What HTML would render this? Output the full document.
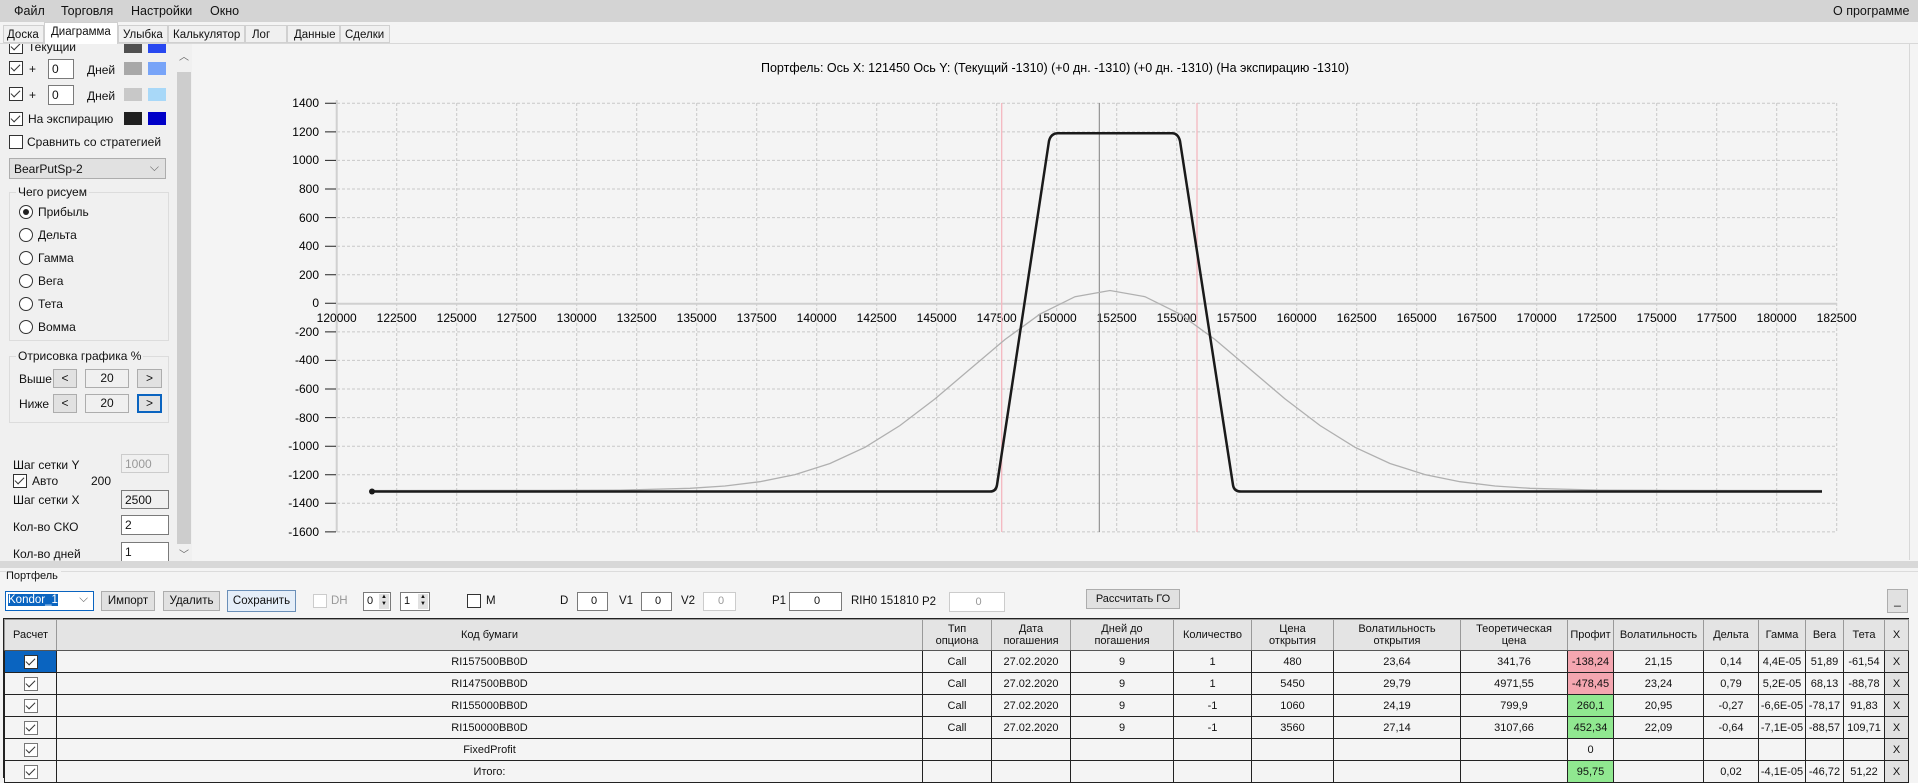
<!DOCTYPE html>
<html><head><meta charset="utf-8"><style>
*{box-sizing:border-box;margin:0;padding:0}
body{width:1918px;height:777px;overflow:hidden;background:#f4f4f4;font-family:"Liberation Sans",sans-serif;font-size:12px;color:#111;position:relative}
.a{position:absolute;white-space:nowrap}
.cb{position:absolute;width:14px;height:14px;border:1px solid #333;background:#fff}
.cb.on::after{content:"";position:absolute;left:3px;top:0px;width:4px;height:8px;border:solid #333;border-width:0 1.3px 1.3px 0;transform:rotate(45deg)}
.rd{position:absolute;width:14px;height:14px;border:1px solid #333;border-radius:50%;background:#fff}
.rd.on::after{content:"";position:absolute;left:3px;top:3px;width:6px;height:6px;border-radius:50%;background:#222}
.inp{position:absolute;border:1px solid #7a7a7a;background:#fff;padding-left:3px;font-size:12px}
.btn{position:absolute;border:1px solid #adadad;background:#e1e1e1;text-align:center;font-size:12px}
.sw{position:absolute;width:18px;height:13px}
table{border-collapse:collapse;position:absolute;left:4px;top:619px;font-size:11px}
td{border:1px solid #222;text-align:center;height:22px;background:#f4f4f4;padding:0;overflow:hidden;white-space:nowrap}
tr.h td{background:#e4e4e4;height:31px;line-height:12px;border-color:#999 #999 #555}
</style></head><body>
<div class="a" style="left:0;top:0;width:1918px;height:22px;background:#d4d4d4"></div>
<div class="a" style="left:14px;top:4px;font-size:12.5px">Файл</div>
<div class="a" style="left:61px;top:4px;font-size:12.5px">Торговля</div>
<div class="a" style="left:131px;top:4px;font-size:12.5px">Настройки</div>
<div class="a" style="left:210px;top:4px;font-size:12.5px">Окно</div>
<div class="a" style="left:1833px;top:4px;font-size:12.5px">О программе</div>
<div class="a" style="left:0;top:43px;width:1918px;height:1px;background:#d8d8d8"></div>
<div class="a" style="left:3px;top:25px;width:41px;height:18px;border:1px solid #d0d0d0;background:#f0f0f0;font-size:11.5px;padding:3px 0 0 3px">Доска</div>
<div class="a" style="left:44px;top:22px;width:74px;height:22px;border:1px solid #d0d0d0;border-bottom:none;background:#fff;font-size:11.5px;padding:3px 0 0 6px">Диаграмма</div>
<div class="a" style="left:118px;top:25px;width:50px;height:18px;border:1px solid #d0d0d0;background:#f0f0f0;font-size:11.5px;padding:3px 0 0 4px">Улыбка</div>
<div class="a" style="left:168px;top:25px;width:77px;height:18px;border:1px solid #d0d0d0;background:#f0f0f0;font-size:11.5px;padding:3px 0 0 4px">Калькулятор</div>
<div class="a" style="left:245px;top:25px;width:42px;height:18px;border:1px solid #d0d0d0;background:#f0f0f0;font-size:11.5px;padding:3px 0 0 6px">Лог</div>
<div class="a" style="left:287px;top:25px;width:53px;height:18px;border:1px solid #d0d0d0;background:#f0f0f0;font-size:11.5px;padding:3px 0 0 6px">Данные</div>
<div class="a" style="left:340px;top:25px;width:50px;height:18px;border:1px solid #d0d0d0;background:#f0f0f0;font-size:11.5px;padding:3px 0 0 4px">Сделки</div>
<div class="a" style="left:1909px;top:44px;width:1px;height:516px;background:#d8d8d8"></div>
<div class="a" style="left:0;top:44px;width:176px;height:518px;background:#f0f0f0;overflow:hidden">
 <div class="cb on" style="left:9px;top:-4px"></div><div class="a" style="left:28px;top:-4px">Текущий</div>
 <div class="sw" style="left:124px;top:-4px;background:#505050"></div><div class="sw" style="left:148px;top:-4px;background:#2848f0"></div>
</div>
<div class="cb on" style="left:9px;top:61px"></div><div class="a" style="left:29px;top:62px">+</div>
<div class="inp" style="left:48px;top:59px;width:26px;height:20px;padding-top:2px">0</div><div class="a" style="left:87px;top:63px">Дней</div>
<div class="sw" style="left:124px;top:62px;background:#a8a8a8"></div><div class="sw" style="left:148px;top:62px;background:#78a4f8"></div>
<div class="cb on" style="left:9px;top:87px"></div><div class="a" style="left:29px;top:88px">+</div>
<div class="inp" style="left:48px;top:85px;width:26px;height:20px;padding-top:2px">0</div><div class="a" style="left:87px;top:89px">Дней</div>
<div class="sw" style="left:124px;top:88px;background:#c8c8c8"></div><div class="sw" style="left:148px;top:88px;background:#a8d8f8"></div>
<div class="cb on" style="left:9px;top:112px"></div><div class="a" style="left:28px;top:112px">На экспирацию</div>
<div class="sw" style="left:124px;top:112px;background:#202020"></div><div class="sw" style="left:148px;top:112px;background:#0000c8"></div>
<div class="cb" style="left:9px;top:135px"></div><div class="a" style="left:27px;top:135px">Сравнить со стратегией</div>
<div class="a" style="left:9px;top:158px;width:157px;height:21px;border:1px solid #adadad;background:#e1e1e1;padding:3px 0 0 4px">BearPutSp-2<span style="position:absolute;right:6px;top:1px;color:#666">⌵</span></div>
<div class="a" style="left:9px;top:192px;width:160px;height:149px;border:1px solid #dcdcdc"></div>
<div class="a" style="left:16px;top:185px;background:#f0f0f0;padding:0 2px">Чего рисуем</div>
<div class="rd on" style="left:19px;top:205px"></div><div class="a" style="left:38px;top:205px">Прибыль</div>
<div class="rd" style="left:19px;top:228px"></div><div class="a" style="left:38px;top:228px">Дельта</div>
<div class="rd" style="left:19px;top:251px"></div><div class="a" style="left:38px;top:251px">Гамма</div>
<div class="rd" style="left:19px;top:274px"></div><div class="a" style="left:38px;top:274px">Вега</div>
<div class="rd" style="left:19px;top:297px"></div><div class="a" style="left:38px;top:297px">Тета</div>
<div class="rd" style="left:19px;top:320px"></div><div class="a" style="left:38px;top:320px">Вомма</div>
<div class="a" style="left:9px;top:356px;width:160px;height:67px;border:1px solid #dcdcdc"></div>
<div class="a" style="left:16px;top:349px;background:#f0f0f0;padding:0 2px">Отрисовка графика %</div>
<div class="a" style="left:19px;top:372px">Выше</div>
<div class="btn" style="left:53px;top:369px;width:24px;height:19px;line-height:17px">&lt;</div>
<div class="a" style="left:85px;top:369px;width:44px;height:19px;border:1px solid #adadad;text-align:center;line-height:17px">20</div>
<div class="btn" style="left:137px;top:369px;width:25px;height:19px;line-height:17px">&gt;</div>
<div class="a" style="left:19px;top:397px">Ниже</div>
<div class="btn" style="left:53px;top:394px;width:24px;height:19px;line-height:17px">&lt;</div>
<div class="a" style="left:85px;top:394px;width:44px;height:19px;border:1px solid #adadad;text-align:center;line-height:17px">20</div>
<div class="btn" style="left:137px;top:394px;width:25px;height:19px;line-height:15px;border:2px solid #0a64c0">&gt;</div>
<div class="a" style="left:13px;top:458px">Шаг сетки Y</div>
<div class="inp" style="left:121px;top:454px;width:48px;height:19px;background:#f0f0f0;border-color:#ccc;color:#999;padding-top:2px">1000</div>
<div class="cb on" style="left:13px;top:474px"></div><div class="a" style="left:32px;top:474px">Авто</div><div class="a" style="left:91px;top:474px">200</div>
<div class="a" style="left:13px;top:493px">Шаг сетки X</div>
<div class="inp" style="left:121px;top:490px;width:48px;height:19px;background:#f0f0f0;padding-top:2px">2500</div>
<div class="a" style="left:13px;top:520px">Кол-во СКО</div>
<div class="inp" style="left:121px;top:515px;width:48px;height:20px;padding-top:2px">2</div>
<div class="a" style="left:13px;top:547px">Кол-во дней</div>
<div class="inp" style="left:121px;top:542px;width:48px;height:20px;padding-top:2px">1</div>
<div class="a" style="left:176px;top:44px;width:16px;height:518px;background:#f0f0f0"></div>
<div class="a" style="left:177px;top:72px;width:14px;height:472px;background:#cdcdcd"></div>
<div class="a" style="left:179px;top:48px;font-size:10px;color:#666">︿</div>
<div class="a" style="left:179px;top:546px;font-size:10px;color:#666">﹀</div>
<svg class="a" style="left:0;top:0" width="1918" height="560" font-family="Liberation Sans" font-size="12">
<text x="1055" y="72" text-anchor="middle" font-size="12.5">Портфель: Ось X:  121450 Ось Y:  (Текущий -1310)  (+0 дн. -1310)  (+0 дн. -1310)  (На экспирацию -1310)</text>
<g stroke="#c8c8c8" stroke-dasharray="3,2" stroke-width="1">
<path d="M396.7 103V532M456.7 103V532M516.7 103V532M576.7 103V532M636.7 103V532M696.7 103V532M756.7 103V532M816.7 103V532M876.7 103V532M936.7 103V532M996.7 103V532M1056.7 103V532M1116.7 103V532M1176.7 103V532M1236.7 103V532M1296.7 103V532M1356.7 103V532M1416.7 103V532M1476.7 103V532M1536.7 103V532M1596.7 103V532M1656.7 103V532M1716.7 103V532M1776.7 103V532M1836.7 103V532"/>
<path d="M337 103.3H1837M337 131.9H1837M337 160.4H1837M337 189H1837M337 217.6H1837M337 246.2H1837M337 274.7H1837M337 331.9H1837M337 360.4H1837M337 389H1837M337 417.6H1837M337 446.2H1837M337 474.7H1837M337 503.3H1837M337 531.9H1837"/>
</g>
<path d="M336.7 100V532M336.7 303.8H1837" stroke="#d0d0d0" stroke-width="2"/>
<g stroke="#222"><path d="M325 103.3H336M325 131.9H336M325 160.4H336M325 189H336M325 217.6H336M325 246.2H336M325 274.7H336M325 303.3H336M325 331.9H336M325 360.4H336M325 389H336M325 417.6H336M325 446.2H336M325 474.7H336M325 503.3H336M325 531.9H336"/></g>
<g text-anchor="end"><text x="319" y="107">1400</text><text x="319" y="136">1200</text><text x="319" y="164">1000</text><text x="319" y="193">800</text><text x="319" y="222">600</text><text x="319" y="250">400</text><text x="319" y="279">200</text><text x="319" y="307">0</text><text x="319" y="336">-200</text><text x="319" y="364">-400</text><text x="319" y="393">-600</text><text x="319" y="422">-800</text><text x="319" y="450">-1000</text><text x="319" y="479">-1200</text><text x="319" y="507">-1400</text><text x="319" y="536">-1600</text></g>
<g text-anchor="middle"><text x="336.7" y="322">120000</text><text x="396.7" y="322">122500</text><text x="456.7" y="322">125000</text><text x="516.7" y="322">127500</text><text x="576.7" y="322">130000</text><text x="636.7" y="322">132500</text><text x="696.7" y="322">135000</text><text x="756.7" y="322">137500</text><text x="816.7" y="322">140000</text><text x="876.7" y="322">142500</text><text x="936.7" y="322">145000</text><text x="996.7" y="322">147500</text><text x="1056.7" y="322">150000</text><text x="1116.7" y="322">152500</text><text x="1176.7" y="322">155000</text><text x="1236.7" y="322">157500</text><text x="1296.7" y="322">160000</text><text x="1356.7" y="322">162500</text><text x="1416.7" y="322">165000</text><text x="1476.7" y="322">167500</text><text x="1536.7" y="322">170000</text><text x="1596.7" y="322">172500</text><text x="1656.7" y="322">175000</text><text x="1716.7" y="322">177500</text><text x="1776.7" y="322">180000</text><text x="1836.7" y="322">182500</text></g>
<path d="M1001.7 103V532M1197 103V532" stroke="#f4b8c0" stroke-width="1.3"/>
<path d="M1099.3 103V532" stroke="#808080" stroke-width="1"/>
<path d="M372 490.5L550 490.4L620 490.1L690 488.3L725 486L760 481.7L795 474.6L830 463.5L865 447.3L900 425.5L935 398.9L970 369.1L1005 339.5L1040 314.1L1075 296.7L1110 290.5L1145 296.7L1180 314.1L1215 339.5L1250 369.1L1285 398.9L1320 425.5L1355 447.3L1390 463.5L1425 474.6L1460 481.7L1495 486L1530 488.3L1600 490.1L1670 490.4L1822 490.5" fill="none" stroke="#b0b0b0" stroke-width="1.3"/>
<path d="M372 491.5L990 491.5Q996 491.5 997 485L1049 141Q1051 133.3 1058 133.3L1172 133.3Q1178 133.3 1180 141L1233 485Q1234 491.5 1241 491.5L1822 491.5" fill="none" stroke="#1a1a1a" stroke-width="2.5"/>
<circle cx="372" cy="491.5" r="3" fill="#1a1a1a"/>
</svg>
<div class="a" style="left:0;top:561px;width:1918px;height:7px;background:#d8d8d8"></div>
<div class="a" style="left:0;top:571px;width:1918px;height:1px;background:#dcdcdc"></div>
<div class="a" style="left:6px;top:570px;font-size:11px;background:#f4f4f4;padding-right:3px">Портфель</div>
<div class="a" style="left:5px;top:591px;width:89px;height:20px;border:1px solid #0a64c0;background:#fff;font-size:11.5px;padding:2px 0 0 2px"><span style="background:#0a64c0;color:#fff">Kondor_1</span><span style="position:absolute;right:5px;top:1px;color:#666">⌵</span></div>
<div class="btn" style="left:101px;top:591px;width:54px;height:20px;line-height:18px;font-size:11.5px">Импорт</div>
<div class="btn" style="left:163px;top:591px;width:57px;height:20px;line-height:18px;font-size:11.5px">Удалить</div>
<div class="btn" style="left:227px;top:590px;width:69px;height:22px;line-height:20px;font-size:11.5px;border-color:#6a8fb8;background:#e5eef8">Сохранить</div>
<div class="cb" style="left:313px;top:594px;border-color:#ccc"></div><div class="a" style="left:331px;top:595px;color:#999;font-size:11.5px">DH</div>
<div class="inp" style="left:363px;top:592px;width:28px;height:19px;font-size:11px;padding-top:2px">0<span style="position:absolute;right:1px;top:1px;width:10px;height:15px;background:#e1e1e1;font-size:6px;line-height:7px;text-align:center">▲<br>▼</span></div>
<div class="inp" style="left:400px;top:592px;width:30px;height:19px;font-size:11px;padding-top:2px">1<span style="position:absolute;right:1px;top:1px;width:10px;height:15px;background:#e1e1e1;font-size:6px;line-height:7px;text-align:center">▲<br>▼</span></div>
<div class="cb" style="left:467px;top:594px"></div><div class="a" style="left:486px;top:595px;font-size:11.5px">M</div>
<div class="a" style="left:560px;top:595px;font-size:11.5px">D</div>
<div class="inp" style="left:577px;top:592px;width:31px;height:19px;text-align:center;font-size:11px;padding-top:2px">0</div>
<div class="a" style="left:619px;top:595px;font-size:11.5px">V1</div>
<div class="inp" style="left:641px;top:592px;width:31px;height:19px;text-align:center;font-size:11px;padding-top:2px">0</div>
<div class="a" style="left:681px;top:595px;font-size:11.5px">V2</div>
<div class="inp" style="left:703px;top:592px;width:33px;height:19px;text-align:center;font-size:11px;padding-top:2px;border-color:#ccc;color:#999">0</div>
<div class="a" style="left:772px;top:595px;font-size:11.5px">P1</div>
<div class="inp" style="left:789px;top:592px;width:53px;height:19px;text-align:center;font-size:11px;padding-top:2px">0</div>
<div class="a" style="left:851px;top:595px;font-size:11.5px">RIH0 151810</div>
<div class="a" style="left:922px;top:596px;font-size:11.5px">P2</div>
<div class="inp" style="left:949px;top:592px;width:56px;height:20px;text-align:center;font-size:11px;padding-top:3px;border-color:#ccc;color:#999">0</div>
<div class="btn" style="left:1086px;top:589px;width:94px;height:20px;line-height:18px;font-size:11px">Рассчитать ГО</div>
<div class="btn" style="left:1887px;top:589px;width:21px;height:24px;line-height:20px">_</div>
<div class="a" style="left:3px;top:618px;width:1906px;height:160px;border:1px solid #222;border-bottom:none"></div>
<table style="table-layout:fixed;width:1904px">
<colgroup><col style="width:52px"><col style="width:866px"><col style="width:69px"><col style="width:79px"><col style="width:103px"><col style="width:78px"><col style="width:82px"><col style="width:127px"><col style="width:107px"><col style="width:46px"><col style="width:90px"><col style="width:55px"><col style="width:47px"><col style="width:38px"><col style="width:41px"><col style="width:24px"></colgroup>
<tr class="h"><td>Расчет</td><td>Код бумаги</td><td>Тип<br>опциона</td><td>Дата<br>погашения</td><td>Дней до<br>погашения</td><td>Количество</td><td>Цена<br>открытия</td><td>Волатильность<br>открытия</td><td>Теоретическая<br>цена</td><td>Профит</td><td>Волатильность</td><td>Дельта</td><td>Гамма</td><td>Вега</td><td>Тета</td><td>X</td></tr>
<tr><td style="background:#0a64c0"><span class="cb on" style="position:relative;display:inline-block;vertical-align:middle"></span></td><td>RI157500BB0D</td><td>Call</td><td>27.02.2020</td><td>9</td><td>1</td><td>480</td><td>23,64</td><td>341,76</td><td style="background:#f4a6b0">-138,24</td><td>21,15</td><td>0,14</td><td>4,4E-05</td><td>51,89</td><td>-61,54</td><td style="background:#e1e1e1">X</td></tr>
<tr><td><span class="cb on" style="position:relative;display:inline-block;vertical-align:middle;border-color:#777"></span></td><td>RI147500BB0D</td><td>Call</td><td>27.02.2020</td><td>9</td><td>1</td><td>5450</td><td>29,79</td><td>4971,55</td><td style="background:#f4a6b0">-478,45</td><td>23,24</td><td>0,79</td><td>5,2E-05</td><td>68,13</td><td>-88,78</td><td style="background:#e1e1e1">X</td></tr>
<tr><td><span class="cb on" style="position:relative;display:inline-block;vertical-align:middle;border-color:#777"></span></td><td>RI155000BB0D</td><td>Call</td><td>27.02.2020</td><td>9</td><td>-1</td><td>1060</td><td>24,19</td><td>799,9</td><td style="background:#90e890">260,1</td><td>20,95</td><td>-0,27</td><td>-6,6E-05</td><td>-78,17</td><td>91,83</td><td style="background:#e1e1e1">X</td></tr>
<tr><td><span class="cb on" style="position:relative;display:inline-block;vertical-align:middle;border-color:#777"></span></td><td>RI150000BB0D</td><td>Call</td><td>27.02.2020</td><td>9</td><td>-1</td><td>3560</td><td>27,14</td><td>3107,66</td><td style="background:#90e890">452,34</td><td>22,09</td><td>-0,64</td><td>-7,1E-05</td><td>-88,57</td><td>109,71</td><td style="background:#e1e1e1">X</td></tr>
<tr><td><span class="cb on" style="position:relative;display:inline-block;vertical-align:middle;border-color:#777"></span></td><td>FixedProfit</td><td></td><td></td><td></td><td></td><td></td><td></td><td></td><td>0</td><td></td><td></td><td></td><td></td><td></td><td style="background:#e1e1e1">X</td></tr>
<tr><td><span class="cb on" style="position:relative;display:inline-block;vertical-align:middle;border-color:#777"></span></td><td>Итого:</td><td></td><td></td><td></td><td></td><td></td><td></td><td></td><td style="background:#90e890">95,75</td><td></td><td>0,02</td><td>-4,1E-05</td><td>-46,72</td><td>51,22</td><td style="background:#e1e1e1">X</td></tr>
</table>
</body></html>
